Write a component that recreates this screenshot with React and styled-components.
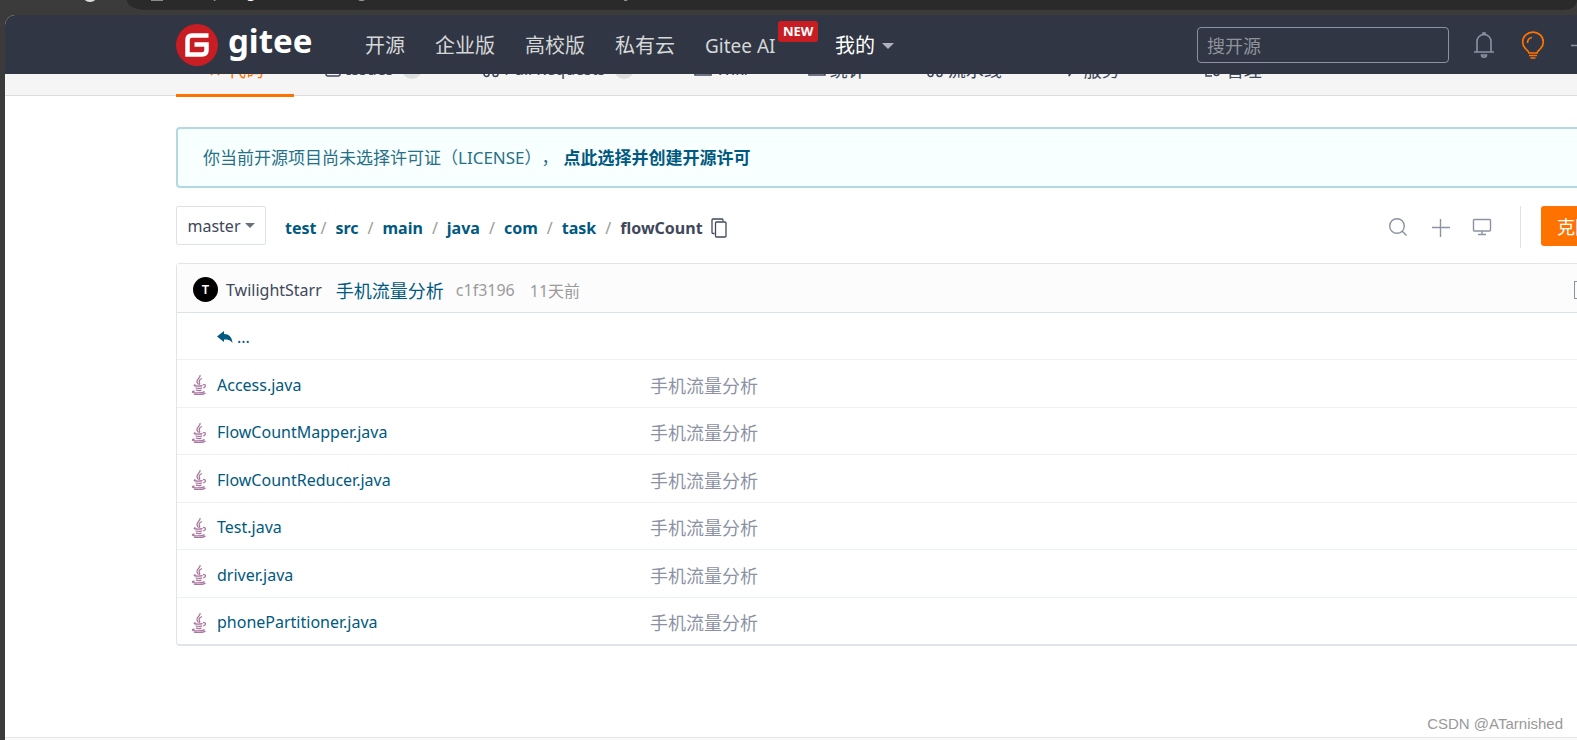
import React from "react";
import styled, { createGlobalStyle } from "styled-components";

const FONTS = '"Noto Sans", "Noto Sans CJK SC", sans-serif';

const files = [
	"Access.java",
	"FlowCountMapper.java",
	"FlowCountReducer.java",
	"Test.java",
	"driver.java",
	"phonePartitioner.java",
];

const crumbs = ["test", "src", "main", "java", "com", "task"];

const navLinks = ["开源", "企业版", "高校版", "私有云"];

const tabs = [
	{ label: "代码", icon: "code", active: true, size: 18 },
	{ label: "Issues", icon: "box", count: 0, size: 16 },
	{ label: "Pull Requests", icon: "branch", count: 0, size: 16 },
	{ label: "Wiki", icon: "book", size: 16 },
	{ label: "统计", icon: "book", size: 18 },
	{ label: "流水线", icon: "branch", size: 18 },
	{ label: "服务", icon: "bolt", size: 18, menu: true },
	{ label: "管理", icon: "edit", size: 18 },
];

const tabPaths = {
	code: "M6 3 2 9l4 6M12 3l4 6-4 6",
	box: "M2 3h14v11a2 2 0 0 1-2 2H4a2 2 0 0 1-2-2z",
	branch: "M2 14a2 2 0 1 0 5 0 2 2 0 1 0-5 0M11 14a2 2 0 1 0 5 0 2 2 0 1 0-5 0M4 11V3M13 11V3",
	book: "M1 3h16v12H1z",
	bolt: "M10 1 4 10h4l-1 6 6-9H9z",
	edit: "M8 3H2v13h6M10 13a2 2 0 1 0 5 0 2 2 0 1 0-5 0",
};

const JavaIcon = () => (
	<svg width="16" height="21" viewBox="0 0 16 21" fill="none" stroke="#a9769f" strokeWidth="1.300">
		<path d="M9 1c1 3-4 4-3 7 .3 1 1 1.600 1.500 2.500" />
		<path d="M11 4.500C8.500 5.500 7.500 7 8.500 8.500c.6 1 .3 1.500-.5 2.200" />
		<path d="M4.500 10.700c-2 .6-1.500 1.200 1 1.300 2 .1 4 0 6-.5" />
		<path d="M12 10.700c3.500-.8 3 2.500.2 3.300" />
		<path d="M4.500 13.700c1.500.8 4.500.8 6.500.2M5 15.900c1.500.8 4 .8 5.500.2" />
		<path d="M3.500 17c-3 .6-3 1.500.5 1.800 4 .3 8 0 9.500-1.300" />
		<path d="M3 20.200c4 .6 9 .5 11.500-1.200" />
	</svg>
);

const App = () => (
	<>
		<GlobalStyle />
		<Browser>
			<Toolbar>
				<Reload>
					<svg width="18" height="18" viewBox="0 0 18 18" fill="none" stroke="#ddd" strokeWidth="2">
						<circle cx="9" cy="10" r="7" />
					</svg>
				</Reload>
				<Address>
					<Lock />
					<span>
						https://<b>gitee.com</b>/twilightstarr/test/tree/master/src/main/java
					</span>
				</Address>
			</Toolbar>
			<Page>
				<Header>
					<Logo href="#">
						<svg width="42" height="42" viewBox="0 0 42 42">
							<circle cx="21" cy="21" r="21" fill="#c71d23" />
							<path
								d="M32.500 11.500H16q-4.500 0-4.500 4.500v14.500H26q4.500 0 4.500-4.500V20.500H18.500"
								fill="none"
								stroke="#fff"
								strokeWidth="4.500"
							/>
						</svg>
						<span>gitee</span>
					</Logo>
					<Nav>
						{navLinks.map((link) => (
							<a href="#" key={link}>
								{link}
							</a>
						))}
						<a href="#" className="ai">
							Gitee AI
							<NewBadge>NEW</NewBadge>
						</a>
						<MineButton type="button">
							我的
							<Caret $size={6} $color="#b0b3bd" />
						</MineButton>
					</Nav>
					<Search type="search" placeholder="搜开源" aria-label="搜开源" />
					<HeaderIcons>
						<button type="button" aria-label="通知">
							<svg width="22" height="28" viewBox="0 0 22 28" fill="none" stroke="#8c92a4" strokeWidth="1.600">
								<path d="M4 21V10.500a7 7 0 0 1 14 0V21M1 21h20" />
								<path d="M8.500 24a2.500 2.200 0 0 0 5 0zM10 3V2h2v1" />
							</svg>
						</button>
						<button type="button" aria-label="提示">
							<svg width="24" height="28" viewBox="0 0 24 28" fill="none" stroke="#fe7300" strokeWidth="1.700">
								<path d="M8 22c0-1.500-1.500-2.500-3.500-4.300a10.300 9.800 0 1 1 15 0c-2 1.800-3.500 2.800-3.500 4.300z" />
								<path d="M8 24.500h8M9.500 27h5M6.500 12A5.500 5.500 0 0 1 11 6.500" />
							</svg>
						</button>
						<button type="button" aria-label="新建">
							<svg width="22" height="28" viewBox="0 0 22 28" fill="none" stroke="#8c92a4" strokeWidth="1.500">
								<path d="M0 14.500h22M11 3v22" />
							</svg>
						</button>
					</HeaderIcons>
				</Header>
				<TabStrip>
					{tabs.map((tab) => (
						<Tab href="#" key={tab.label} $active={tab.active} $size={tab.size}>
							<svg width="18" height="18" viewBox="0 0 18 18" fill="none" stroke="currentColor" strokeWidth="1.500">
								<path d={tabPaths[tab.icon]} />
							</svg>
							{tab.label}
							{tab.count !== undefined && <Count>{tab.count}</Count>}
							{tab.menu && <TabCaret $size={5} $color="#6b6f7d" />}
						</Tab>
					))}
				</TabStrip>
				<Content>
					<Notice>
						你当前开源项目尚未选择许可证（LICENSE），
						<a href="#">点此选择并创建开源许可</a>
					</Notice>
					<PathBar>
						<Branch type="button">
							master
							<Caret $size={5} $color="#6b6f7d" />
						</Branch>
						<Crumbs aria-label="路径">
							{crumbs.map((crumb) => (
								<React.Fragment key={crumb}>
									<a href="#">{crumb}</a>
									<i>/</i>
								</React.Fragment>
							))}
							<strong>flowCount</strong>
							<button type="button" aria-label="复制路径">
								<svg width="16" height="20" viewBox="0 0 16 20" fill="none" stroke="#40485b" strokeWidth="1.300">
									<path d="M3.500 15.500h-1.500q-1 0-1-1V2q0-1 1-1h9q1 0 1 1v1" />
									<rect x="4.500" y="4" width="10.500" height="15" rx="1" />
								</svg>
							</button>
						</Crumbs>
						<Tools>
							<button type="button" aria-label="搜索">
								<svg width="20" height="20" viewBox="0 0 20 20" fill="none" stroke="#8c92a4" strokeWidth="1.400">
									<circle cx="9" cy="9" r="7.300" />
									<path d="m14 14 4.500 4.500" />
								</svg>
							</button>
							<button type="button" aria-label="添加">
								<svg width="20" height="20" viewBox="0 0 20 20" fill="none" stroke="#8c92a4" strokeWidth="1.400">
									<path d="M2 10.500h18M10.500 2v18" />
								</svg>
							</button>
							<button type="button" aria-label="Web IDE">
								<svg width="20" height="20" viewBox="0 0 20 20" fill="none" stroke="#8c92a4" strokeWidth="1.400">
									<rect x="1.500" y="2.500" width="17" height="11.500" rx="1" />
									<path d="M10 14v3M6 17.500h8" />
								</svg>
							</button>
						</Tools>
						<Clone type="button">克隆/下载</Clone>
					</PathBar>
					<Tree>
						<Commit>
							<Avatar>T</Avatar>
							<a href="#" className="author">
								TwilightStarr
							</a>
							<a href="#" className="message">
								手机流量分析
							</a>
							<span>c1f3196</span>
							<span>11天前</span>
							<History type="button" aria-label="历史" />
						</Commit>
						<FileTable>
							<colgroup>
								<col className="name" />
								<col />
							</colgroup>
							<tbody>
								<tr>
									<td colSpan={2}>
										<Back href="#">
											<svg width="16" height="12" viewBox="0 0 16 12" fill="#005980">
												<path d="M7 0v3c5 0 8 3 8.500 9C13.500 9 11 8.500 7 8.500V11L0 5.500z" />
											</svg>
											...
										</Back>
									</td>
								</tr>
								{files.map((file) => (
									<tr key={file}>
										<td>
											<FileLink href="#">
												<JavaIcon />
												{file}
											</FileLink>
										</td>
										<td className="note">手机流量分析</td>
									</tr>
								))}
							</tbody>
						</FileTable>
					</Tree>
				</Content>
				<Footer />
			</Page>
			<Watermark>CSDN @ATarnished</Watermark>
		</Browser>
	</>
);

export default App;

const GlobalStyle = createGlobalStyle`
	* {
		box-sizing: border-box;
	}
	body {
		margin: 0;
		background: #3b3b3b;
		font-family: ${FONTS};
		overflow: hidden;
	}
	a {
		text-decoration: none;
	}
	button {
		font-family: inherit;
		padding: 0;
		border: none;
		background: none;
		cursor: pointer;
	}
	svg {
		display: block;
		flex-shrink: 0;
	}
`;

const Browser = styled.div`
	height: 100vh;
	display: flex;
	flex-direction: column;
	overflow: hidden;
	position: relative;
`;

const Toolbar = styled.div`
	height: 15px;
	flex-shrink: 0;
	display: flex;
	align-items: flex-start;
	padding-left: 81px;
`;

const Reload = styled.div`
	height: 2px;
	width: 46px;
	display: flex;
	align-items: flex-end;
	overflow: hidden;
`;

const Address = styled.div`
	flex: 1;
	height: 10px;
	display: flex;
	align-items: flex-end;
	gap: 28px;
	padding: 0 0 8px 24px;
	background: #2a2a2a;
	border-radius: 0 0 12px 18px / 0 0 10px 10px;
	color: #9a9a9a;
	font-size: 16px;
	line-height: 22px;
	span {
		height: 2px;
		display: flex;
		align-items: flex-end;
		overflow: hidden;
	}
	b {
		color: #fff;
		font-weight: 400;
	}
`;

const Lock = styled.div`
	width: 12px;
	height: 1px;
	margin-bottom: 1px;
	background: #8a8a8a;
`;

const Page = styled.div`
	flex: 1;
	min-height: 0;
	margin-left: 5px;
	display: flex;
	flex-direction: column;
	background: #fff;
	border-radius: 10px 0 0 0;
	overflow: hidden;
`;

const Header = styled.header`
	height: 59px;
	flex-shrink: 0;
	display: flex;
	align-items: center;
	padding-left: 171px;
	background: #303643;
	position: relative;
`;

const Logo = styled.a`
	display: flex;
	align-items: center;
	gap: 10px;
	width: 189px;
	color: #fff;
	span {
		font-weight: 700;
		font-size: 33px;
		line-height: 40px;
		padding-bottom: 7px;
	}
`;

const Nav = styled.nav`
	display: flex;
	align-items: center;
	gap: 30px;
	padding-top: 3px;
	font-size: 20px;
	line-height: 30px;
	a {
		color: #d6d7d9;
	}
	.ai {
		font-size: 19px;
		width: 100px;
		position: relative;
		white-space: nowrap;
	}
`;

const NewBadge = styled.span`
	position: absolute;
	top: -10px;
	left: 73px;
	padding: 0 5px;
	border-radius: 3px;
	background: #c71d23;
	color: #fff;
	font-size: 13px;
	font-weight: 700;
	line-height: 21px;
`;

const MineButton = styled.button`
	display: flex;
	align-items: center;
	gap: 7px;
	color: #fff;
	font-size: 20px;
	line-height: 30px;
`;

const Caret = styled.span`
	border: ${(p) => p.$size}px solid transparent;
	border-top-color: ${(p) => p.$color};
	border-bottom: none;
`;

const TabCaret = styled(Caret)`
	margin: 0 4px 0 6px;
`;

const Search = styled.input`
	width: 252px;
	height: 36px;
	margin-left: auto;
	padding: 2px 9px 0;
	border: 1px solid #8c92a4;
	border-radius: 4px;
	background: transparent;
	color: #fff;
	font-family: ${FONTS};
	font-size: 18px;
	&::placeholder {
		color: #8f939d;
	}
`;

const HeaderIcons = styled.div`
	display: flex;
	width: 128px;
	padding-left: 24px;
	gap: 26px;
	overflow: hidden;
`;

const TabStrip = styled.nav`
	height: 22px;
	flex-shrink: 0;
	display: flex;
	align-items: flex-end;
	padding-left: 171px;
	background: #f5f5f5;
	border-bottom: 1px solid #dcddde;
`;

const Tab = styled.a`
	display: flex;
	align-items: center;
	gap: 4px;
	height: 54px;
	margin-bottom: -2px;
	padding: 0 30px;
	color: ${(p) => (p.$active ? "#fe7300" : "#40485b")};
	border-bottom: 3px solid ${(p) => (p.$active ? "#fe7300" : "transparent")};
	font-size: ${(p) => p.$size}px;
	white-space: nowrap;
`;

const Count = styled.span`
	width: 20px;
	margin-left: 5px;
	border-radius: 10px;
	background: #dcddde;
	font-size: 13px;
	line-height: 20px;
	text-align: center;
`;

const Content = styled.main`
	flex: 1;
	padding: 31px 0 0 171px;
`;

const Notice = styled.div`
	height: 61px;
	padding: 0 25px;
	border: 2px solid #b2d9e1;
	border-right: none;
	border-radius: 4px 0 0 4px;
	background: #f8ffff;
	color: #276f86;
	font-size: 17px;
	line-height: 58px;
	text-spacing-trim: space-all;
	a {
		margin-left: 5px;
		color: #005980;
		font-weight: 700;
	}
`;

const PathBar = styled.div`
	display: flex;
	align-items: flex-start;
	height: 42px;
	margin: 18px 0 15px;
`;

const Branch = styled.button`
	display: flex;
	align-items: center;
	justify-content: center;
	gap: 4px;
	width: 90px;
	height: 39px;
	border: 1px solid #dce3e8;
	border-radius: 2px;
	color: #40485b;
	font-size: 16px;
`;

const Crumbs = styled.nav`
	display: flex;
	align-items: center;
	height: 42px;
	padding-top: 2px;
	margin-left: 19px;
	font-size: 16px;
	font-weight: 700;
	a {
		color: #005980;
	}
	i {
		margin: 0 9px;
		color: #9b9b9b;
		font-style: normal;
		font-weight: 400;
	}
	a:first-child + i {
		margin-left: 4px;
	}
	strong {
		margin-right: 8px;
		color: #40485b;
		font-weight: 700;
	}
`;

const Tools = styled.div`
	display: flex;
	align-items: center;
	gap: 22px;
	height: 42px;
	margin-left: auto;
	padding-right: 28px;
	border-right: 1px solid #dce3e8;
`;

const Clone = styled.button`
	width: 36px;
	height: 40px;
	margin-left: 20px;
	padding-left: 16px;
	border-radius: 3px 0 0 3px;
	background: #fe7300;
	color: #fff;
	font-size: 18px;
	text-align: left;
	white-space: nowrap;
	overflow: hidden;
`;

const Tree = styled.section`
	border: 1px solid #dfe5ea;
	border-right: none;
	border-bottom-width: 2px;
	border-radius: 4px 0 0 4px;
`;

const Commit = styled.div`
	display: flex;
	align-items: center;
	height: 49px;
	padding: 3px 0 0 16px;
	border-bottom: 1px solid #dce3e8;
	background: #fcfcfc;
	color: #9b9b9b;
	font-size: 16px;
	span + span {
		margin-left: 15px;
	}
	.author {
		color: #40485b;
		margin: 0 14px 0 8px;
	}
	.message {
		color: #005980;
		font-size: 18px;
		margin-right: 12px;
	}
`;

const Avatar = styled.div`
	width: 25px;
	height: 25px;
	border-radius: 50%;
	background: #000;
	color: #fff;
	font-size: 13px;
	font-weight: 600;
	line-height: 25px;
	text-align: center;
`;

const History = styled.button`
	width: 3px;
	height: 18px;
	margin-left: auto;
	border: 1px solid #8c92a4;
	border-right: none;
`;

const FileTable = styled.table`
	width: 100%;
	table-layout: fixed;
	border-collapse: collapse;
	td {
		height: 47px;
		padding: 3px 0 0 14px;
		border-top: 1px solid #eef1f3;
		font-size: 16px;
	}
	tr:nth-child(even) td {
		height: 48px;
	}
	tr:first-child td {
		height: 46px;
		border-top: none;
		padding-left: 40px;
	}
	.name {
		width: 459px;
	}
	.note {
		color: #8c92a4;
		font-size: 18px;
	}
`;

const FileLink = styled.a`
	display: flex;
	align-items: center;
	gap: 10px;
	color: #005980;
`;

const Back = styled(FileLink)`
	gap: 4px;
`;

const Footer = styled.footer`
	height: 3px;
	border-top: 1px solid #e3e5e7;
	background: #fafafa;
`;

const Watermark = styled.span`
	position: absolute;
	right: 14px;
	bottom: 6px;
	color: #999;
	font-family: "Liberation Sans", Arial, sans-serif;
	font-size: 15px;
	line-height: 20px;
`;
